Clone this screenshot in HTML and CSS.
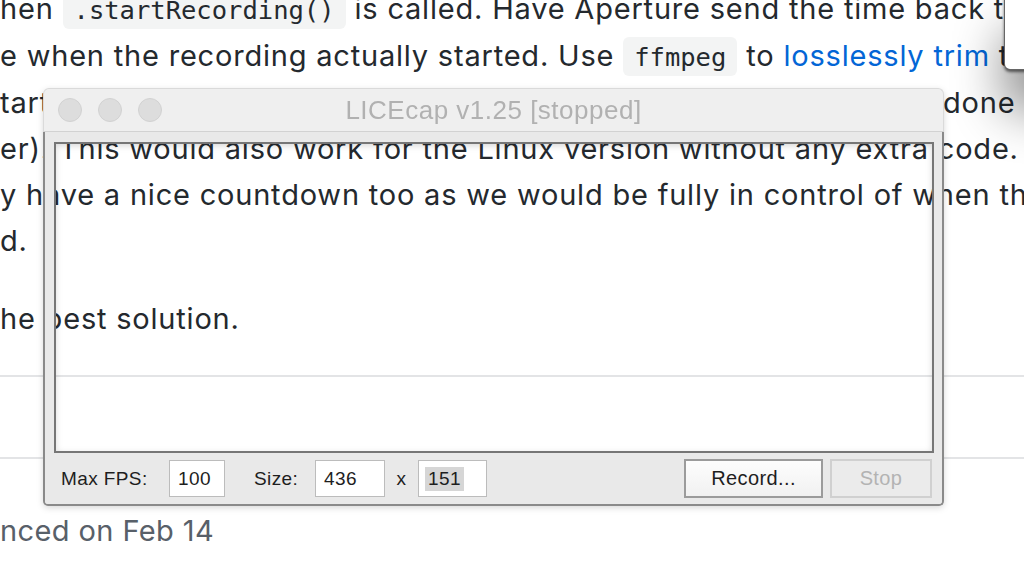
FILE: index.html
```html
<!DOCTYPE html>
<html>
<head>
<meta charset="utf-8">
<title>LICEcap over issue</title>
<link rel="stylesheet" href="styles.css">
</head>
<body>
<div class="page">
  <div class="para">
    <div class="ln">hen <code>.startRecording()</code> is called. Have Aperture send the time back to</div>
    <div class="ln">e when the recording actually started. Use <code>ffmpeg</code> to <a class="link" href="#">losslessly trim</a> the</div>
    <div class="ln">tart of the video to the time the recording began, which could be done</div>
    <div class="ln">er). This would also work for the Linux version without any extra code. The</div>
    <div class="ln">y have a nice countdown too as we would be fully in control of when the</div>
    <div class="ln">d.</div>
  </div>
  <div class="para para-last">
    <div class="ln">he best solution.</div>
  </div>
  <div class="rule"></div>
  <div class="rule rule2"></div>
  <div class="meta">nced on Feb 14</div>
</div>

<div class="side-window"></div>

<div class="lc">
  <div class="lc-title">
    <div class="dots"><span></span><span></span><span></span></div>
    <div class="lc-name">LICEcap v1.25 [stopped]</div>
  </div>
  <div class="lc-body">
    <div class="lc-frame">
      <div class="lc-capture"></div>
    </div>
    <div class="lc-controls">
      <span class="lbl lbl-fps">Max FPS:</span>
      <span class="inp inp-fps">100</span>
      <span class="lbl lbl-size">Size:</span>
      <span class="inp inp-w">436</span>
      <span class="lbl lbl-x">x</span>
      <span class="inp inp-h"><span class="sel">151</span></span>
      <span class="btn btn-rec">Record...</span>
      <span class="btn btn-stop">Stop</span>
    </div>
  </div>
</div>
</body>
</html>
```

FILE: styles.css
```css
html, body {
  margin: 0;
  padding: 0;
  width: 1024px;
  height: 566px;
  overflow: hidden;
  background: #ffffff;
}

body {
  position: relative;
  font-family: Inter, "Noto Sans", "Liberation Sans", sans-serif;
  color: #24292e;
}

.page {
  margin-top: -14px;
  display: flex;
  flex-direction: column;
}

.para {
  margin: 0 0 32px 0;
}

.para-last {
  margin-bottom: 33px;
}

.ln {
  white-space: nowrap;
  font-size: 29px;
  letter-spacing: 0.8px;
  line-height: 46px;
}

code {
  font-family: "DejaVu Sans Mono", "Liberation Mono", monospace;
  font-size: 25.5px;
  letter-spacing: 0;
  background: #f3f4f4;
  border-radius: 6px;
  padding: 5px 11px 4px 11px;
}

.link {
  color: #0366d6;
  text-decoration: none;
}

.rule {
  height: 2px;
  background: #e3e4e6;
}

.rule2 {
  margin-top: 80px;
}

.meta {
  margin-top: 54px;
  font-size: 29px;
  letter-spacing: 0.4px;
  line-height: 36px;
  color: #586069;
  white-space: nowrap;
}

/* another window sticking in at top right */
.side-window {
  position: absolute;
  left: 1004px;
  top: -10px;
  width: 300px;
  height: 78px;
  background: #ffffff;
  border: 1px solid rgba(0, 0, 0, 0.6);
  border-radius: 6px;
  box-shadow: 0 2px 3px rgba(0, 0, 0, 0.55), 0 40px 50px 0 rgba(0, 0, 0, 0.45);
}

/* LICEcap window */
.lc {
  position: absolute;
  left: 43px;
  top: 88px;
  width: 901px;
  font-family: "Liberation Sans", Arial, sans-serif;
  filter: drop-shadow(0 2px 3px rgba(0, 0, 0, 0.15));
}

.lc-title {
  height: 42px;
  background: #efefef;
  border: 1px solid #dadada;
  border-bottom-color: #d2d2d2;
  border-radius: 6px 6px 0 0;
  display: flex;
  align-items: center;
  position: relative;
}

.dots {
  display: flex;
  gap: 16px;
  padding-left: 14px;
}

.dots span {
  width: 22px;
  height: 22px;
  border-radius: 50%;
  background: #dddddd;
  border: 1px solid #d2d2d2;
}

.lc-name {
  position: absolute;
  left: 0;
  right: 0;
  text-align: center;
  font-size: 26px;
  letter-spacing: 0.5px;
  color: #b1b1b1;
}

.lc-body {
  border: 2px solid #8a8a8a;
  border-top: none;
  border-radius: 0 0 5px 5px;
  overflow: hidden;
}

.lc-frame {
  border-style: solid;
  border-color: #e9e9e9;
  border-width: 10px 8px 0 9px;
}

.lc-capture {
  height: 307px;
  border: 2px solid #767676;
  background: transparent;
}

.lc-controls {
  height: 51px;
  background: #e9e9e9;
  display: flex;
  align-items: center;
  padding: 0 8px 0 16px;
  font-size: 19px;
  letter-spacing: 0.4px;
  color: #1e1e1e;
}

.lbl {
  display: inline-block;
}

.lbl-fps { width: 108px; }
.lbl-size { width: 61px; margin-left: 29px; }
.lbl-x { width: 33px; text-align: center; }

.inp {
  box-sizing: border-box;
  height: 37px;
  background: #ffffff;
  border: 1px solid #bcbcbc;
  display: flex;
  align-items: center;
  padding-left: 8px;
}

.inp-fps { width: 56px; }
.inp-w { width: 70px; }
.inp-h { width: 69px; padding-left: 6px; }

.sel {
  background: #d6d6d6;
  padding: 1px 3px;
}

.btn {
  box-sizing: border-box;
  height: 39px;
  display: flex;
  align-items: center;
  justify-content: center;
  font-size: 20px;
}

.btn-rec {
  margin-left: auto;
  width: 139px;
  border: 2px solid #9b9b9b;
  background: linear-gradient(#fdfdfd, #f1f1f1);
  color: #1e1e1e;
}

.btn-stop {
  width: 102px;
  margin-left: 7px;
  margin-right: 2px;
  border: 2px solid #d0d0d0;
  background: #ebebeb;
  color: #b3b3b3;
}
```
